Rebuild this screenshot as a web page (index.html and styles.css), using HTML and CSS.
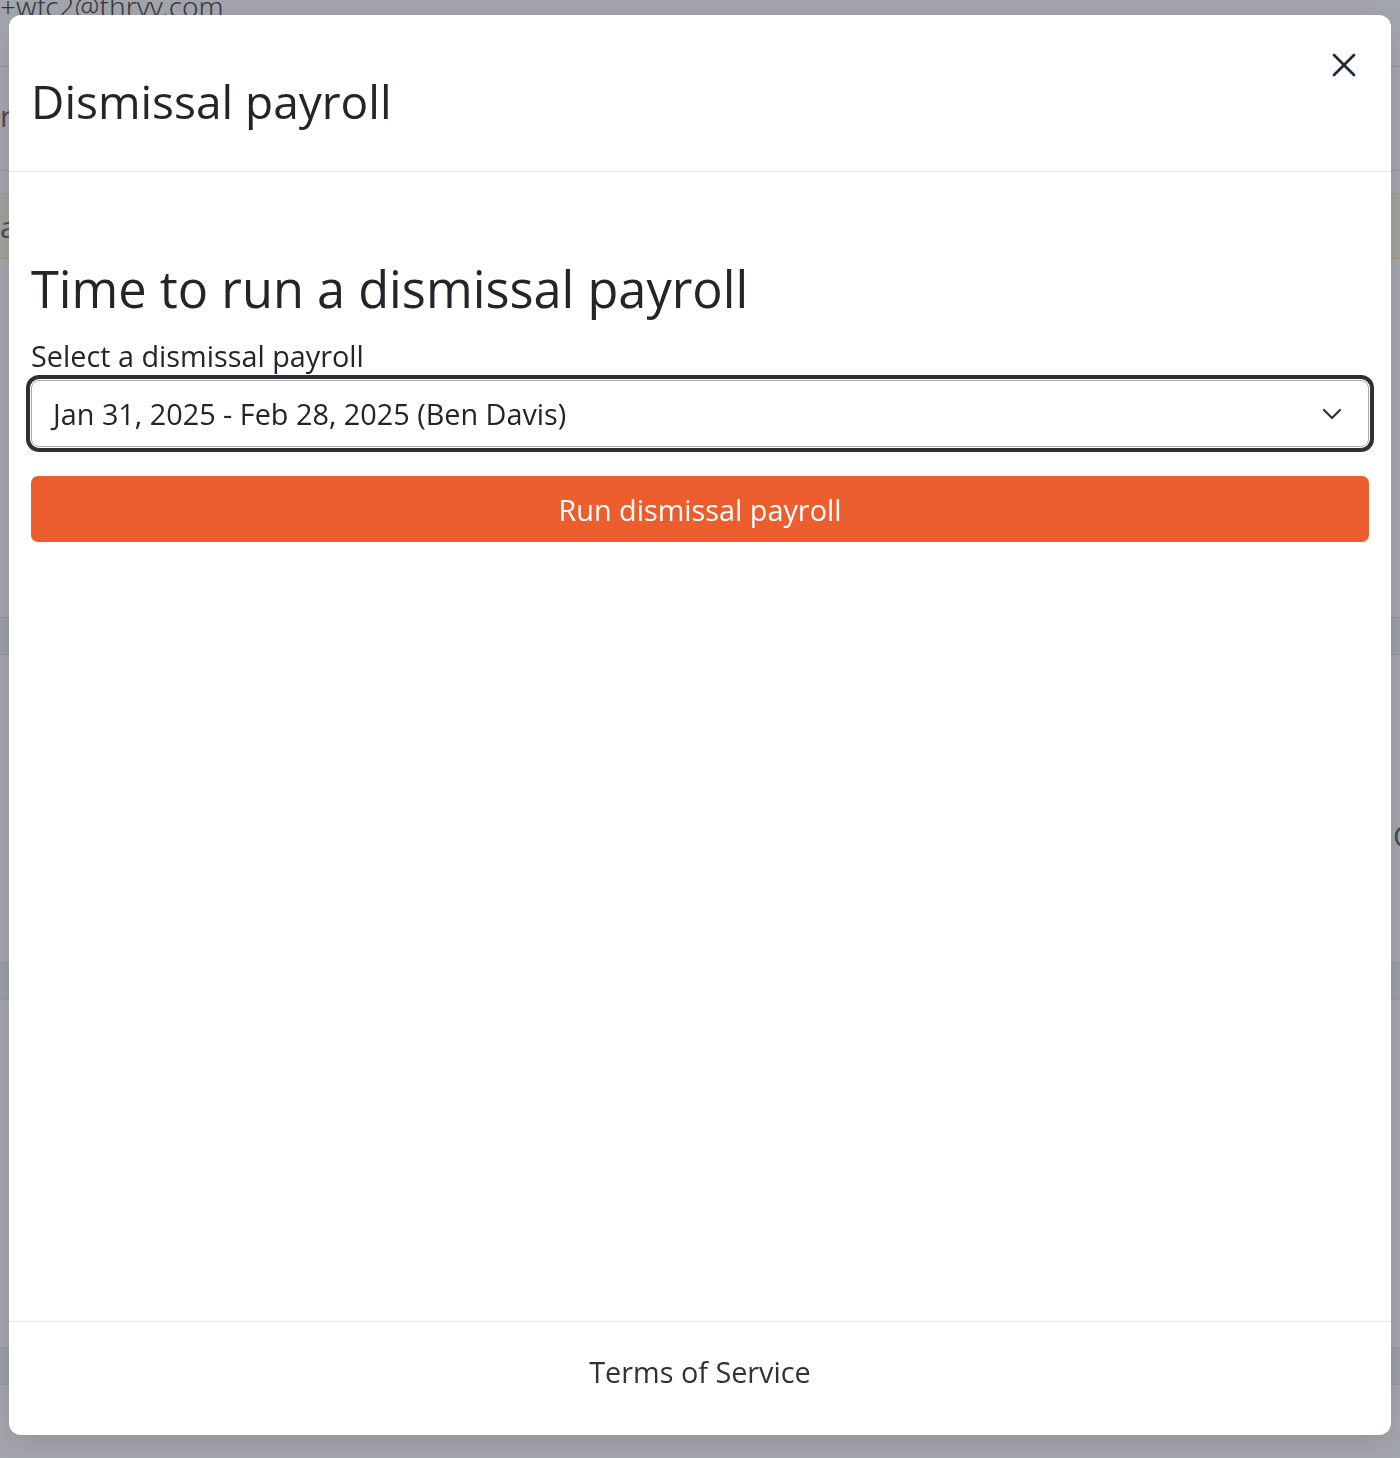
FILE: index.html
```html
<!DOCTYPE html>
<html lang="en">
<head>
  <meta charset="UTF-8">
  <meta name="viewport" content="width=device-width, initial-scale=1.0">
  <title>Dismissal payroll</title>
  <link rel="stylesheet" href="styles.css">
</head>
<body>
<!-- page behind the dialog, dimmed by the overlay -->
<div class="page">
  <div class="page-email">+wfc2@thryv.com</div>
  <div class="page-row page-row-top"><span>r</span></div>
  <div class="page-notice"><span>a</span></div>
  <div class="page-row page-row-plain"></div>
  <div class="page-band page-band-1"></div>
  <div class="page-row page-row-mid"><span class="page-right">C</span></div>
  <div class="page-band"></div>
  <div class="page-row page-row-low"></div>
  <div class="page-band"></div>
</div>

<div class="overlay"></div>

<div class="modal" role="dialog">
  <div class="modal-header">
    <h1 class="modal-title">Dismissal payroll</h1>
    <button class="close-btn" type="button" aria-label="Close">
      <svg width="24" height="24" viewBox="0 0 24 24" fill="none" stroke="#1f2a3a" stroke-width="2.8" stroke-linecap="round">
        <path d="M2 2 L22 22 M22 2 L2 22"/>
      </svg>
    </button>
  </div>

  <div class="modal-body">
    <h2 class="run-heading">Time to run a dismissal payroll</h2>
    <label class="field-label" for="payroll-select">Select a dismissal payroll</label>
    <div class="select-wrap">
      <div class="select-box" id="payroll-select">
        <span>Jan 31, 2025 - Feb 28, 2025 (Ben Davis)</span>
        <svg width="20" height="12" viewBox="0 0 20 12" fill="none" stroke="#2f3237" stroke-width="2.2" stroke-linecap="round" stroke-linejoin="round">
          <path d="M2 2 L10 10 L18 2"/>
        </svg>
      </div>
    </div>
    <button class="run-btn" type="button">Run dismissal payroll</button>
  </div>

  <div class="modal-footer">
    <a class="terms" href="#">Terms of Service</a>
  </div>
</div>
</body>
</html>
```

FILE: styles.css
```css
html, body {
  margin: 0;
  padding: 0;
}

body {
  font-family: "Open Sans", "Noto Sans", sans-serif;
  background: #fff;
  height: 1458px;
  overflow: hidden;
}

/* background page */
.page {
  color: #222;
}

.page-email {
  font-family: "Noto Sans", sans-serif;
  font-weight: 300;
  font-size: 28px;
  line-height: 30px;
  margin-top: -9px;
  height: 75px;
  border-bottom: 1px solid #d9d9dd;
  color: #333;
}

.page-row {
  font-size: 30px;
  border-bottom: 1px solid #e4e4e6;
}

.page-row span {
  display: block;
  color: #555;
}

.page-row-top {
  height: 103px;
}

.page-row-top span {
  padding-top: 28px;
}

.page-notice {
  height: 64px;
  margin-top: 22px;
  background: #fbf6e2;
  border-top: 1px solid #efe0a4;
  border-bottom: 1px solid #efe0a4;
  font-size: 30px;
}

.page-notice span {
  display: block;
  padding-top: 12px;
  color: #555;
}

.page-row-plain {
  height: 358px;
}

.page-band {
  height: 36px;
  background: #f0f0f2;
  border-bottom: 1px solid #e4e4e6;
}

.page-row-mid {
  height: 307px;
  position: relative;
}

.page-right {
  position: absolute;
  right: -12px;
  top: 160px;
  font-size: 30px;
}

.page-row-low {
  height: 347px;
}

.overlay {
  position: fixed;
  inset: 0;
  background: rgba(62, 66, 80, 0.47);
}

/* dialog */
.modal {
  position: fixed;
  left: 9px;
  top: 15px;
  width: 1382px;
  height: 1420px;
  background: #fff;
  border-radius: 12px;
  display: flex;
  flex-direction: column;
  box-shadow: 0 8px 30px rgba(0, 0, 0, 0.12);
  overflow: hidden;
}

.modal-header {
  height: 157px;
  box-sizing: border-box;
  border-bottom: 1px solid #e6e6e6;
  padding: 0 35px 0 22px;
  display: flex;
  justify-content: space-between;
  align-items: flex-start;
}

.modal-title {
  margin: 56px 0 0;
  font-size: 46px;
  font-weight: 400;
  line-height: 60px;
  color: #22252a;
}

.close-btn {
  margin-top: 38px;
  background: none;
  border: none;
  padding: 0;
  cursor: pointer;
  width: 24px;
  height: 24px;
}

.modal-body {
  flex: 1;
  padding: 82px 22px 0;
}

.run-heading {
  margin: 0;
  font-size: 50.5px;
  font-weight: 400;
  line-height: 70px;
  color: #22252a;
}

.field-label {
  display: block;
  margin-top: 14px;
  font-size: 28.8px;
  line-height: 36px;
  color: #22252a;
}

.select-wrap {
  margin-top: 2px;
  padding: 4px;
  margin-left: -4px;
  margin-right: -4px;
}

.select-box {
  height: 67px;
  box-sizing: border-box;
  border: 1px solid #a9abaf;
  border-radius: 8px;
  outline: 4px solid #2d3035;
  outline-offset: 1px;
  padding: 0 26px 0 21px;
  display: flex;
  align-items: center;
  justify-content: space-between;
  font-size: 28.8px;
  color: #22252a;
}

.run-btn {
  display: block;
  width: 100%;
  height: 66px;
  margin-top: 25px;
  border: none;
  border-radius: 7px;
  background: #ed5e2e;
  color: #fff;
  font-family: "Open Sans", "Noto Sans", sans-serif;
  font-size: 28.8px;
  cursor: pointer;
}

.modal-footer {
  height: 114px;
  box-sizing: border-box;
  border-top: 1px solid #e6e6e6;
  padding-bottom: 14px;
  display: flex;
  align-items: center;
  justify-content: center;
}

.terms {
  font-size: 28.8px;
  color: #2f3237;
  text-decoration: none;
}
```
